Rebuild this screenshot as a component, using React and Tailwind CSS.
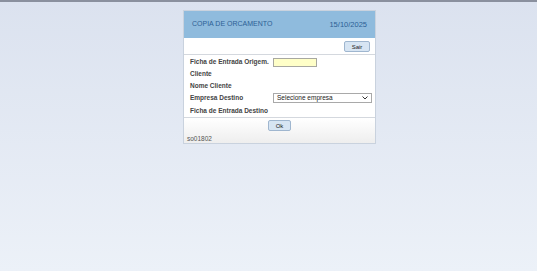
export default function App() {
  return (
    <div
      className="w-[537px] h-[271px] flex flex-col bg-gradient-to-b from-[#dbe2ef] to-[#ecf1f8]"
      style={{ fontFamily: '"Liberation Sans", Arial, sans-serif' }}
    >
      <div className="h-[2px] bg-[#8a909e] shrink-0" />
      <div className="flex pt-[8px] pl-[183px]">
        <div className="w-[193px] bg-white border border-[#c9d2de] flex flex-col">
          <div className="h-[27px] bg-[#8fbbdd] flex items-center justify-between px-[8px] text-[7px] text-[#2d5f95]">
            <span>COPIA DE ORCAMENTO</span>
            <span className="text-[7.5px]">15/10/2025</span>
          </div>
          <div className="flex justify-end pr-[5px] pt-[3px] pb-[2px]">
            <button className="w-[26px] h-[11px] rounded-[2px] border border-[#9fb6cf] bg-[#d7e5f3] text-[6px] text-[#222] leading-none">
              Sair
            </button>
          </div>
          <div className="border-y border-[#d4d8de] flex flex-col pl-[6px] pr-[2px] pt-[1px] pb-[1px] text-[6.5px] font-semibold text-[#444]">
            <div className="flex items-center h-[12px]">
              <span className="w-[83px]">Ficha de Entrada Origem.</span>
              <div className="w-[44px] h-[9px] bg-[#ffffc8] border border-[#a8a8a0]" />
            </div>
            <div className="flex items-center h-[12px]">Cliente</div>
            <div className="flex items-center h-[12px]">Nome Cliente</div>
            <div className="flex items-center h-[12px]">
              <span className="w-[83px]">Empresa Destino</span>
              <div className="w-[99px] h-[10px] border border-[#a9a9a9] bg-white flex items-center justify-between px-[3px] font-normal text-[6.5px] text-[#222]">
                <span>Selecione empresa</span>
                <svg width="6" height="4" viewBox="0 0 6 4">
                  <path d="M0.5 0.5 L3 3 L5.5 0.5" stroke="#333" strokeWidth="1" fill="none" />
                </svg>
              </div>
            </div>
            <div className="flex items-center h-[12px] pt-[1px]">Ficha de Entrada Destino</div>
          </div>
          <div className="flex flex-col bg-gradient-to-b from-white to-[#eeeeee]">
            <div className="flex justify-center pt-[2px]">
              <button className="w-[23px] h-[11px] rounded-[2px] border border-[#9fb6cf] bg-[#d7e5f3] text-[6px] text-[#222] leading-none">
                Ok
              </button>
            </div>
            <div className="px-[3px] pt-[3px] text-[6.5px] text-[#555] h-[12px] flex items-center">so01802</div>
          </div>
        </div>
      </div>
    </div>
  );
}
